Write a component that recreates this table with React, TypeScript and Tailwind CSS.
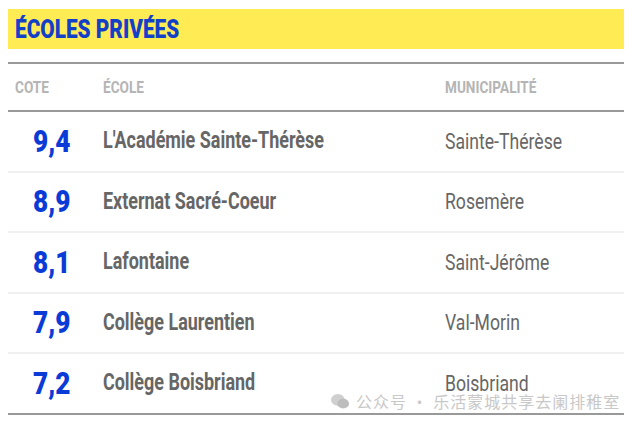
import React from 'react';

const rows = [
  { cote: '9,4', ecole: "L'Académie Sainte-Thérèse", ville: 'Sainte-Thérèse' },
  { cote: '8,9', ecole: 'Externat Sacré-Coeur', ville: 'Rosemère' },
  { cote: '8,1', ecole: 'Lafontaine', ville: 'Saint-Jérôme' },
  { cote: '7,9', ecole: 'Collège Laurentien', ville: 'Val-Morin' },
  { cote: '7,2', ecole: 'Collège Boisbriand', ville: 'Boisbriand' },
];

// narrow display face: Roboto squeezed horizontally
const cond = "inline-block origin-left whitespace-nowrap font-['Roboto',sans-serif]";

const App = () => {
  return (
    <div className="w-[640px] h-[425px] bg-white overflow-hidden relative px-2 pt-[9px]">
      {/* Title */}
      <div className="h-[40px] w-[616px] bg-[#ffec55] flex items-center px-[7px]">
        <h1 className={`${cond} scale-x-[0.8] text-[26px] font-black text-[#1340c8] leading-none`}>
          ÉCOLES PRIVÉES
        </h1>
      </div>

      {/* Table */}
      <div className="mt-[13px] w-[616px] border-t-2 border-[#999]">
        <div className="h-[48px] flex items-center font-bold text-[17px] text-[#b5b5b5] border-b-2 border-[#999]">
          <div className="w-[95px] pl-[7px]"><span className={`${cond} scale-x-[0.8]`}>COTE</span></div>
          <div className="w-[342px]"><span className={`${cond} scale-x-[0.8]`}>ÉCOLE</span></div>
          <div><span className={`${cond} scale-x-[0.8]`}>MUNICIPALITÉ</span></div>
        </div>
        {rows.map((r, i) => (
          <div
            key={r.cote}
            className={`h-[60.5px] flex items-center ${i === rows.length - 1 ? 'border-b-2 border-[#999]' : 'border-b-2 border-[#f0f0f0]'}`}
          >
            <div className="w-[95px] pl-[25px]">
              <span className={`${cond} scale-x-[0.82] text-[32px] font-black text-[#0b3bd6] leading-none`}>{r.cote}</span>
            </div>
            <div className="w-[342px]">
              <span className={`${cond} scale-x-[0.78] text-[23px] font-bold text-[#666]`}>{r.ecole}</span>
            </div>
            <div>
              <span className={`${cond} scale-x-[0.8] text-[22px] text-[#666]`}>{r.ville}</span>
            </div>
          </div>
        ))}
      </div>

      {/* Watermark */}
      <div className="absolute left-[330px] top-[389px] flex items-center gap-[6px] text-[16px] text-[#c8c8c8] font-['Noto_Sans_CJK_SC',sans-serif]">
        <svg width="20" height="17" viewBox="0 0 18 16" fill="#cfcfcf">
          <ellipse cx="7" cy="6.5" rx="6.5" ry="5.5" />
          <ellipse cx="12" cy="10" rx="5.5" ry="4.6" fill="#bdbdbd" />
        </svg>
        <span className="tracking-[1px]">公众号 · 乐活蒙城共享去阑排稚室</span>
      </div>
    </div>
  );
};

export default App;
